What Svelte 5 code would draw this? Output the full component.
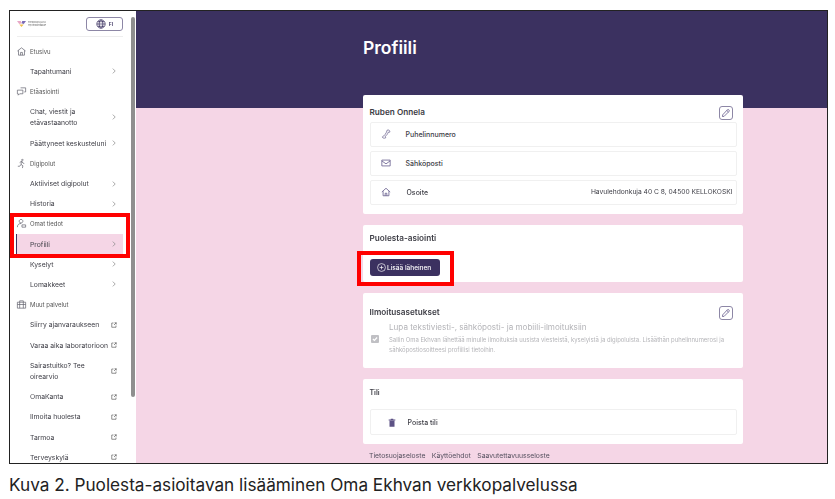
<script>
  const pencil = "M4 16.5 L3.5 20.5 L7.5 20 L19 8.5 a2 2 0 0 0 -4 -4 Z M14 6 l4 4";

  const sections = [
    { title: "Etusivu", icon: "home", items: [{ label: "Tapahtumani" }] },
    {
      title: "Etäasiointi",
      icon: "chat",
      items: [
        { label: "Chat, viestit ja etävastaanotto", tall: true },
        { label: "Päättyneet keskusteluni" },
      ],
    },
    {
      title: "Digipolut",
      icon: "run",
      items: [{ label: "Aktiiviset digipolut" }, { label: "Historia" }],
    },
    {
      title: "Omat tiedot",
      icon: "user",
      items: [{ label: "Profiili", active: true }, { label: "Kyselyt" }, { label: "Lomakkeet" }],
    },
    {
      title: "Muut palvelut",
      icon: "bag",
      items: [
        { label: "Siirry ajanvaraukseen", ext: true },
        { label: "Varaa aika laboratorioon", ext: true },
        { label: "Sairastuitko? Tee oirearvio", ext: true, tall: true },
        { label: "OmaKanta", ext: true },
        { label: "Ilmoita huolesta", ext: true },
        { label: "Tarmoa", ext: true },
        { label: "Terveyskylä", ext: true },
      ],
    },
  ];

  const icons = {
    home: "M3 11 L12 4 L21 11 M5.5 9.5 V20 H18.5 V9.5 M10 20 V14 H14 V20",
    chat: "M10 4 H21 V13 H18 M3 9 H15 V17 H8 L5 20 V17 H3 Z",
    run: "M14 3 a1.5 1.5 0 1 0 .01 0 M8 10 L12 7 L15 11 L18 12 M12 7 L11 14 L15 17 L14 22 M11 14 L8 18 L4 18",
    user: "M11 3 a4 4 0 1 0 .01 0 M3 20 C3 14 7 12 11 12 M13 15 H21 V20 H13 Z",
    bag: "M3 7 H21 V20 H3 Z M8 7 V4 H16 V7 M8 7 V20 M16 7 V20 M3 12 H21",
  };
</script>

<div class="page">
  <div class="frame">
    <aside class="sidebar">
      <div class="top">
        <div class="logo">
          <svg width="9" height="6" viewBox="0 0 12 8">
            <path d="M0 0 H5 L6 3 L3 4 Z" fill="#e7a7c6" />
            <path d="M12 0 H7 L6 3 L9 4 Z" fill="#7d6bb5" />
            <path d="M3 4.500 H9 L6 8 Z" fill="#f0c04e" />
          </svg>
          <div class="logotext">
            <span>TIEDONKULKU</span>
            <span>Hyvinvointialue</span>
          </div>
        </div>
        <div class="lang">
          <svg width="10" height="10" viewBox="0 0 24 24" fill="none" stroke="#3b3160" stroke-width="1.800">
            <circle cx="12" cy="12" r="10" />
            <ellipse cx="12" cy="12" rx="4.500" ry="10" />
            <path d="M2 12 H22 M4 6.500 H20 M4 17.500 H20" />
          </svg>
          <span>FI</span>
        </div>
      </div>

      {#each sections as section}
        <div class="section">
          <svg class="sec-icon" width="11" height="11" viewBox="0 0 24 24" fill="none" stroke="#5f5f6b" stroke-width="1.500">
            <path d={icons[section.icon]} />
          </svg>
          <span>{section.title}</span>
        </div>
        {#each section.items as item}
          <div class="item" class:tall={item.tall} class:active={item.active}>
            <span class="label">{item.label}</span>
            {#if item.ext}
              <svg class="ext" width="6" height="6" viewBox="0 0 12 12" fill="none" stroke="#555" stroke-width="1.300">
                <path d="M5 2 H1.500 V10.500 H10 V7 M6 6 L10.500 1.500 M7 1.500 H10.500 V5" />
              </svg>
            {:else}
              <svg class="chev" width="4" height="6" viewBox="0 0 5 7" fill="none" stroke="#888" stroke-width="0.900">
                <path d="M1 .5 L4 3.500 L1 6.500" />
              </svg>
            {/if}
          </div>
        {/each}
      {/each}
    </aside>

    <div class="scroll"><div class="thumb"></div></div>

    <main class="main">
      <header class="hero"><h1>Profiili</h1></header>
      <div class="content">
        <section class="card first">
          <div class="head">
            <h2>Ruben Onnela</h2>
            <button class="edit" aria-label="Muokkaa">
              <svg width="10" height="10" viewBox="0 0 24 24" fill="none" stroke="#5d5285" stroke-width="1.800"><path d={pencil} /></svg>
            </button>
          </div>
          <div class="rows">
            <div class="row">
              <svg class="row-icon" width="10" height="10" viewBox="0 0 24 24" fill="none" stroke="#6b6390" stroke-width="1.800">
                <path d="M15 2.500 C19 1.500 22 4 21 7.500 L17 8 C16 12 13 16 10 18 L11.500 21 C8 23 4 22 3 19 C8 17 13 10 15 2.500 Z" />
              </svg>
              <span class="row-label">Puhelinnumero</span>
            </div>
            <div class="row">
              <svg class="row-icon" width="10" height="10" viewBox="0 0 24 24" fill="none" stroke="#6b6390" stroke-width="2">
                <path d="M2 5 H22 V19 H2 Z M2 7 L12 14 L22 7" />
              </svg>
              <span class="row-label">Sähköposti</span>
            </div>
            <div class="row">
              <svg class="row-icon" width="10" height="10" viewBox="0 0 24 24" fill="none" stroke="#6b6390" stroke-width="2">
                <path d="M2 12 L12 3 L22 12 M5 10 V21 H19 V10 M10 21 V15 H14 V21" />
              </svg>
              <span class="row-label osoite">Osoite</span>
              <span class="row-value">Havulehdonkuja 40 C 8, 04500 KELLOKOSKI</span>
            </div>
          </div>
        </section>

        <section class="card second">
          <h2>Puolesta-asiointi</h2>
          <button class="add">
            <svg width="9" height="9" viewBox="0 0 24 24" fill="none" stroke="#fff" stroke-width="1.800">
              <circle cx="12" cy="12" r="10.500" /><path d="M12 7 V17 M7 12 H17" />
            </svg>
            Lisää läheinen
          </button>
        </section>

        <section class="card third">
          <div class="head">
            <h2>Ilmoitusasetukset</h2>
            <button class="edit" aria-label="Muokkaa">
              <svg width="10" height="10" viewBox="0 0 24 24" fill="none" stroke="#5d5285" stroke-width="1.800"><path d={pencil} /></svg>
            </button>
          </div>
          <div class="consent">
            <span class="check">
              <svg width="6" height="6" viewBox="0 0 10 10" fill="none" stroke="#fff" stroke-width="2"><path d="M1.500 5 L4 7.500 L8.500 2.500" /></svg>
            </span>
            <div>
              <div class="consent-title">Lupa tekstiviesti-, sähköposti- ja mobiili-ilmoituksiin</div>
              <p>Sallin Oma Ekhvan lähettää minulle ilmoituksia uusista viesteistä, kyselyistä ja digipoluista. Lisääthän puhelinnumerosi ja sähköpostiosoitteesi profiilisi tietoihin.</p>
            </div>
          </div>
        </section>

        <section class="card fourth">
          <h2 class="small">Tili</h2>
          <div class="row delete">
            <svg class="row-icon" width="10" height="11" viewBox="0 0 24 24" fill="#5d5285">
              <path d="M4 5 H9 V3 H15 V5 H20 V7 H4 Z M6 8 H18 V22 H6 Z" />
            </svg>
            <span class="row-label">Poista tili</span>
          </div>
        </section>

        <footer class="links">
          <span>Tietosuojaseloste</span>
          <span>Käyttöehdot</span>
          <span>Saavutettavuusseloste</span>
        </footer>
      </div>
    </main>

    <div class="mark mark-side"></div>
    <div class="mark mark-add"></div>
  </div>
  <p class="caption">Kuva 2. Puolesta-asioitavan lisääminen Oma Ekhvan verkkopalvelussa</p>
</div>

<style>
  :global(body) {
    margin: 0;
    background: #fff;
  }

  .page {
    width: 835px;
    height: 499px;
    padding: 10px 0 0 9px;
    box-sizing: border-box;
    overflow: hidden;
    font-family: Inter, "Liberation Sans", sans-serif;
  }

  .frame {
    position: relative;
    display: flex;
    width: 819px;
    height: 454px;
    box-sizing: border-box;
    border: 1px solid #222;
    overflow: hidden;
    background: #f5d6e6;
  }

  .caption {
    margin: 10px 0 0;
    font-size: 17.200px;
    line-height: 22px;
    color: #222;
  }

  .sidebar {
    width: 118px;
    flex: none;
    background: #fff;
    overflow: hidden;
    color: #3d3d45;
    filter: blur(0.3px);
  }

  .top {
    display: flex;
    align-items: center;
    justify-content: space-between;
    margin: 0 5px 4px 7px;
    height: 26px;
    box-sizing: border-box;
    border-bottom: 1px solid #eee;
  }

  .logo {
    display: flex;
    align-items: center;
    gap: 2px;
  }

  .logotext {
    display: flex;
    flex-direction: column;
    font-size: 2.500px;
    line-height: 3px;
    color: #555;
  }

  .lang {
    display: flex;
    align-items: center;
    justify-content: center;
    gap: 3px;
    width: 35px;
    height: 12px;
    border: 1px solid #8d87a6;
    border-radius: 3px;
    font-size: 5px;
    font-weight: 600;
    color: #3b3160;
  }

  .section {
    display: flex;
    align-items: center;
    gap: 3px;
    height: 20.200px;
    padding-left: 6px;
    font-size: 6px;
    color: #555;
  }

  .sec-icon {
    flex: none;
  }

  .item {
    display: flex;
    align-items: center;
    justify-content: space-between;
    height: 20.200px;
    padding: 0 11px 0 20px;
    font-size: 6.800px;
    line-height: 11px;
    color: #3d3d45;
  }

  .item.tall {
    height: 31.500px;
  }

  .item.active {
    margin: 0 5px 0 6px;
    padding: 0 6px 0 13px;
    background: #f5d6e6;
    border-left: 1px solid #3b3160;
  }

  .label {
    max-width: 80px;
  }

  .chev {
    flex: none;
    margin-right: 1px;
  }

  .ext {
    flex: none;
  }

  .scroll {
    width: 8px;
    flex: none;
    background: #fff;
    box-sizing: border-box;
    padding: 6px 1px 0 3px;
  }

  .thumb {
    height: 380px;
    background: #8f8f8f;
    border-radius: 2px;
  }

  .main {
    flex: 1;
    min-width: 0;
    filter: blur(0.3px);
  }

  .hero {
    height: 97px;
    background: #3b3160;
    padding: 27px 0 0 227px;
    box-sizing: border-box;
  }

  h1 {
    margin: 0;
    font-size: 17.500px;
    line-height: 20px;
    font-weight: 600;
    color: #fff;
  }

  .content {
    width: 380px;
    margin: -13px 0 0 227px;
    display: flex;
    flex-direction: column;
    gap: 11px;
  }

  .card {
    background: #fff;
    border-radius: 2px;
    padding: 0 6.500px;
    box-sizing: border-box;
  }

  .first {
    height: 119px;
    padding-top: 10px;
  }

  .second {
    height: 57px;
    padding-top: 8px;
  }

  .third {
    height: 75px;
    padding-top: 12px;
  }

  .fourth {
    height: 65px;
    padding-top: 8px;
  }

  .head {
    display: flex;
    align-items: center;
    justify-content: space-between;
    padding-right: 3.500px;
    height: 15px;
  }

  h2 {
    margin: 0;
    font-size: 8.200px;
    line-height: 11px;
    font-weight: 600;
    color: #3d3d45;
  }

  h2.small {
    font-size: 7px;
    margin-bottom: 11px;
  }

  .edit {
    display: flex;
    align-items: center;
    justify-content: center;
    width: 14px;
    height: 14px;
    padding: 0;
    border: 1px solid #8d87a6;
    border-radius: 3px;
    background: #fff;
  }

  .rows {
    display: flex;
    flex-direction: column;
    gap: 4px;
    margin-top: 1.500px;
  }

  .row {
    display: flex;
    align-items: center;
    height: 25px;
    box-sizing: border-box;
    border: 1px solid #f0f0f0;
    border-radius: 2px;
    padding: 0 3px 0 10px;
    font-size: 7px;
    font-weight: 500;
    color: #3d3d45;
  }

  .row-label {
    margin-left: 15px;
  }

  .row-label.osoite {
    margin-left: 16px;
  }

  .row-value {
    margin-left: auto;
    font-size: 6.700px;
    font-weight: 400;
  }

  .delete {
    height: 26px;
    padding-left: 16px;
  }

  .delete .row-label {
    margin-left: 11px;
  }

  .add {
    display: flex;
    align-items: center;
    gap: 1.500px;
    width: 70px;
    height: 17px;
    margin-top: 15px;
    padding: 0 0 0 7px;
    border: none;
    border-radius: 3px;
    background: #3b3160;
    color: #fff;
    font-family: inherit;
    font-size: 6.500px;
    font-weight: 500;
  }

  .consent {
    display: flex;
    align-items: center;
    gap: 10px;
    margin-top: 2px;
    color: #b4b4b8;
  }

  .check {
    display: flex;
    align-items: center;
    justify-content: center;
    flex: none;
    width: 8px;
    height: 8px;
    margin-left: 1.500px;
    border-radius: 1px;
    background: #c0c0c4;
  }

  .consent-title {
    font-size: 8.100px;
    line-height: 11px;
  }

  .consent p {
    margin: 2px 0 0;
    font-size: 5.950px;
    line-height: 10px;
  }

  .links {
    display: flex;
    gap: 6.500px;
    margin-top: -4px;
    padding-left: 6px;
    font-size: 6.800px;
    color: #55505f;
  }

  .mark {
    position: absolute;
    border: 4px solid #f00;
    box-sizing: border-box;
  }

  .mark-side {
    left: 0;
    top: 202px;
    width: 120px;
    height: 45px;
  }

  .mark-add {
    left: 347px;
    top: 240px;
    width: 97px;
    height: 35px;
  }
</style>
